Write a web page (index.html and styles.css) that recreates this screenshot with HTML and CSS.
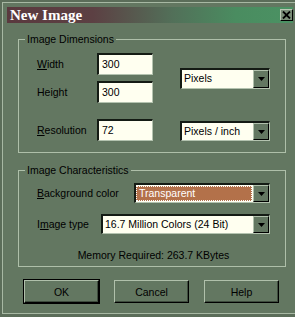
FILE: index.html
```html
<!DOCTYPE html>
<html lang="en">
<head>
  <meta charset="UTF-8" />
  <title>New Image</title>
  <link rel="stylesheet" href="styles.css">
</head>
<body>
  <div class="window">
    <div class="titlebar">
      <span class="title">New Image</span>
      <span class="close">
        <svg width="9" height="8" viewBox="0 0 9 8"><path d="M1 0.5 L8 7.5 M8 0.5 L1 7.5" stroke="#000" stroke-width="1.8"/></svg>
      </span>
    </div>

    <div class="dialog">
      <fieldset class="group">
        <legend>Image Dimensions</legend>
        <div class="dims">
          <label class="lbl r1"><u>W</u>idth</label>
          <div class="field r1">300</div>
          <label class="lbl r2">Height</label>
          <div class="field r2">300</div>
          <div class="combo unit">
            <span class="text">Pixels</span>
            <span class="arrow"><svg width="7" height="4" viewBox="0 0 7 4"><path d="M0 0 H7 L3.5 4 Z" fill="#000"/></svg></span>
          </div>
          <label class="lbl res"><u>R</u>esolution</label>
          <div class="field res">72</div>
          <div class="combo res">
            <span class="text">Pixels / inch</span>
            <span class="arrow"><svg width="7" height="4" viewBox="0 0 7 4"><path d="M0 0 H7 L3.5 4 Z" fill="#000"/></svg></span>
          </div>
        </div>
      </fieldset>

      <fieldset class="group">
        <legend>Image Characteristics</legend>
        <div class="chars">
          <div class="row">
            <label><u>B</u>ackground color</label>
            <div class="combo bg-combo sel">
              <span class="text">Transparent</span>
              <span class="arrow"><svg width="7" height="4" viewBox="0 0 7 4"><path d="M0 0 H7 L3.5 4 Z" fill="#000"/></svg></span>
            </div>
          </div>
          <div class="row">
            <label>I<u>m</u>age type</label>
            <div class="combo type-combo">
              <span class="text">16.7 Million Colors (24 Bit)</span>
              <span class="arrow"><svg width="7" height="4" viewBox="0 0 7 4"><path d="M0 0 H7 L3.5 4 Z" fill="#000"/></svg></span>
            </div>
          </div>
          <div class="memory">Memory Required: 263.7 KBytes</div>
        </div>
      </fieldset>

      <div class="buttons">
        <button class="default">OK</button>
        <button>Cancel</button>
        <button>Help</button>
      </div>
    </div>
  </div>
</body>
</html>
```

FILE: styles.css
```css
* {
  box-sizing: border-box;
}

body {
  margin: 0;
  background: #5b6d59;
  font-family: 'Liberation Sans', Arial, sans-serif;
  font-size: 10.5px;
  color: #000;
}

.window {
  margin: 2px 0 0 2px;
  height: 312px;
  background: #637761;
  border: 1px solid #a7b8a3;
  border-right: 0;
  padding: 4px 2px 0 4px;
}

.titlebar {
  height: 16px;
  display: flex;
  align-items: center;
  justify-content: space-between;
  padding-left: 3px;
  background: linear-gradient(to right, #5a393e 0%, #5c4043 30%, #527059 58%, #4a8c60 80%, #4b9263 100%);
}

.title {
  font-family: 'Liberation Serif', 'Times New Roman', serif;
  font-weight: bold;
  font-size: 15px;
  line-height: 16px;
  color: #fff;
}

.close {
  width: 13px;
  height: 12px;
  display: flex;
  align-items: center;
  justify-content: center;
  background: #7a8d77;
  border: 1px solid;
  border-color: #b9c8b4 #000 #000 #b9c8b4;
}

.dialog {
  padding: 10px 7px 0 11px;
}

.group {
  margin: 0 0 11px;
  padding: 0;
  min-width: 0;
  border: 1px solid #aebfa9;
}

.group legend {
  margin-left: 6px;
  padding: 0 2px;
  line-height: 12px;
}

.dims {
  display: grid;
  grid-template-columns: 60px 56px 27px 90px;
  grid-template-rows: 22px 22px 32px;
  row-gap: 6px;
  padding: 8px 15px 11px 18px;
}

.lbl {
  grid-column: 1;
  align-self: center;
}

.field {
  grid-column: 2;
  height: 22px;
  background: #fffff0;
  border-top: 2px solid #141b14;
  border-left: 2px solid #141b14;
  border-bottom: 1px solid #b4c3af;
  border-right: 1px solid #b4c3af;
  padding-left: 3px;
  line-height: 18px;
}

.r1 { grid-row: 1; }
.r2 { grid-row: 2; }

.dims .res {
  grid-row: 3;
  align-self: end;
}

.dims .lbl.res {
  align-self: end;
  padding-bottom: 5px;
}

.combo {
  display: flex;
  height: 21px;
  background: #fffff0;
  border-top: 2px solid #141b14;
  border-left: 2px solid #141b14;
  border-bottom: 1px solid #b4c3af;
  border-right: 1px solid #b4c3af;
}

.combo .text {
  flex: 1;
  padding-left: 2px;
  line-height: 17px;
  white-space: nowrap;
  overflow: hidden;
}

.combo .arrow {
  width: 16px;
  display: flex;
  align-items: center;
  justify-content: center;
  background: #637761;
  border: 1px solid;
  border-color: #b0c0ab #000 #000 #b0c0ab;
}

.dims .unit {
  grid-column: 4;
  grid-row: 1 / 3;
  align-self: center;
}

.dims .combo.res {
  grid-column: 4;
  height: 20px;
}

.chars {
  padding: 7px 15px 5px 18px;
}

.row {
  display: flex;
  align-items: center;
  height: 20px;
}

.row + .row {
  margin-top: 11px;
}

.row .combo {
  margin-left: auto;
  height: 20px;
}

.bg-combo {
  width: 136px;
}

.type-combo {
  width: 169px;
}

.sel .text {
  margin: 1px 1px 1px 0;
  background: #b3714a;
  color: #fff;
  outline: 1px dotted #fff;
  outline-offset: -1px;
  line-height: 15px;
  padding-left: 3px;
}

.memory {
  margin-top: 15px;
  text-align: center;
  line-height: 12px;
}

.buttons {
  display: flex;
  gap: 15px;
  margin: 13px 0 0 6px;
}

button {
  width: 75px;
  height: 23px;
  padding: 0;
  font: inherit;
  color: #000;
  background: #637761;
  border: 1px solid;
  border-color: #b0c0ab #000 #000 #b0c0ab;
  box-shadow: inset -1px -1px 0 #3e4c3d;
}

button.default {
  outline: 1px solid #000;
}
```
